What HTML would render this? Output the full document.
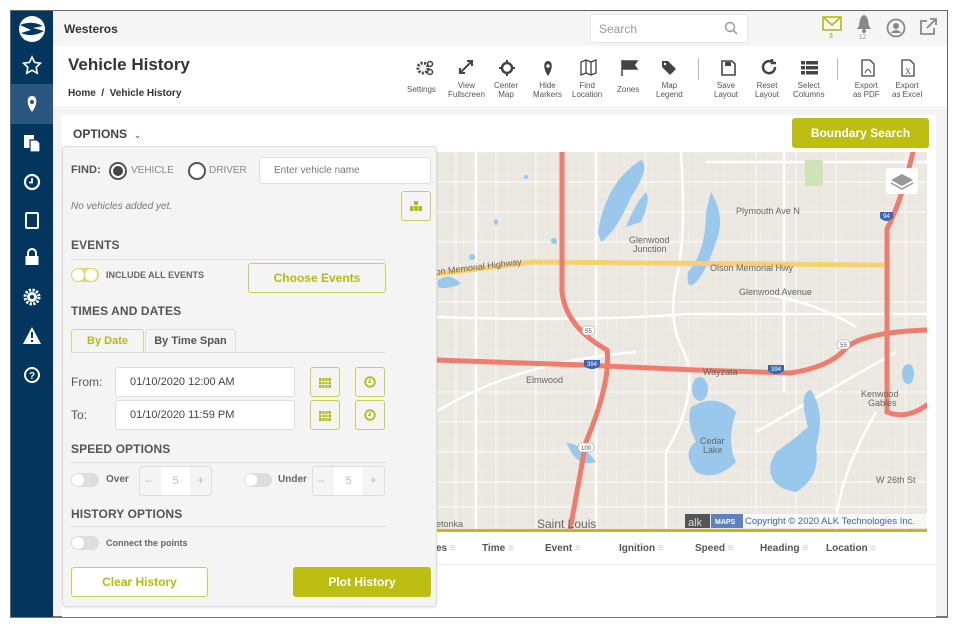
<!DOCTYPE html>
<html><head><meta charset="utf-8"><style>
*{box-sizing:border-box;margin:0;padding:0}
body{width:960px;height:633px;background:#fff;font-family:"Liberation Sans",sans-serif;position:relative;overflow:hidden;color:#444}
.a{position:absolute}
.frame{left:10px;top:10px;width:938px;height:608px;border:1px solid #666;border-bottom:2px solid #777;background:#f4f4f4;overflow:hidden}
.side{left:11px;top:11px;width:42px;height:606px;background:#03365f}
.ic{position:absolute;left:0;width:42px;text-align:center}
.btnO{position:absolute;border:1.5px solid #c9cd5a;border-radius:3px;background:#fff;color:#b3ba14;font-weight:bold;font-size:12px;display:flex;align-items:center;justify-content:center}
.lbl{position:absolute;font-size:12px;color:#555}
.h{position:absolute;font-size:12px;color:#555;font-weight:bold;letter-spacing:.1px}
.line{position:absolute;height:1px;background:#ddd}
.inp{position:absolute;background:#fff;border:1px solid #ddd;border-radius:3px;font-size:11px;color:#444;padding-left:14px;display:flex;align-items:center}
.tog{position:absolute;width:28px;height:14px;border-radius:7px;background:#ddd}
.tog:after{content:"";position:absolute;left:1px;top:1px;width:12px;height:12px;border-radius:6px;background:#fff}
.tb{position:absolute;top:60px;text-align:center;font-size:8px;color:#555;line-height:9px}
.th{position:absolute;top:543px;font-size:10px;color:#555;font-weight:bold}
.th i{font-style:normal;color:#ccc;font-weight:normal}
</style></head><body>
<div class="a frame"></div>
<div class="a side">
 <div class="ic" style="top:73px;height:40px;background:#2a5680"></div>
 <svg class="a" style="left:0;top:0" width="42" height="380" viewBox="0 0 42 380">
  <circle cx="21" cy="18" r="13" fill="#fff"/>
  <path d="M9 14 Q21 9 32 15 L22 17 L33 20 Q21 27 10 22 L20 19Z" fill="#03365f"/>
  <path d="M21 46 l2.6 5.4 5.8.8-4.2 4.1 1 5.8-5.2-2.8-5.2 2.8 1-5.8-4.2-4.1 5.8-.8z" fill="none" stroke="#fff" stroke-width="1.6"/>
  <path d="M21 101 C15 93 15.5 85 21 85 C26.5 85 27 93 21 101Z" fill="#fff"/><circle cx="21" cy="91" r="2" fill="#2a5680"/>
  <rect x="13" y="124" width="10" height="13" fill="#fff"/><path d="M19 129 h7 l3 3 v9 h-10z" fill="#fff" stroke="#03365f" stroke-width="1.2"/>
  <circle cx="21" cy="171" r="7" fill="none" stroke="#fff" stroke-width="2.2"/><path d="M21 167 v4.5 h-3" stroke="#fff" stroke-width="1.8" fill="none"/>
  <rect x="15" y="202" width="12" height="15" rx="1" fill="none" stroke="#fff" stroke-width="2"/>
  <rect x="14.5" y="245" width="13" height="9" fill="#fff"/><path d="M17 245 v-3 a4 4 0 0 1 8 0 v3" stroke="#fff" stroke-width="2" fill="none"/>
  <circle cx="21" cy="286" r="5" fill="#fff"/><circle cx="21" cy="286" r="7" fill="none" stroke="#fff" stroke-width="3" stroke-dasharray="2.2 1.5"/><circle cx="21" cy="286" r="2" fill="#03365f"/>
  <path d="M21 316 L30 333 H12Z" fill="#fff"/><rect x="20" y="321" width="2" height="6" fill="#03365f"/><rect x="20" y="329" width="2" height="2" fill="#03365f"/>
  <circle cx="21" cy="364" r="7" fill="none" stroke="#fff" stroke-width="2"/><text x="21" y="368" font-size="10" font-weight="bold" fill="#fff" text-anchor="middle" font-family="Liberation Sans">?</text>
 </svg>
</div>
<div class="a" style="left:53px;top:11px;width:894px;height:35px;background:#f5f5f5"></div>
<div class="a" style="left:64px;top:22px;font-size:12px;font-weight:bold;color:#333">Westeros</div>
<div class="a" style="left:590px;top:14px;width:158px;height:29px;background:#fff;border:1px solid #e6e6e6;border-radius:3px"></div>
<div class="a" style="left:599px;top:22px;font-size:12px;color:#999">Search</div>
<svg class="a" style="left:724px;top:21px" width="14" height="14"><circle cx="6" cy="6" r="4.5" fill="none" stroke="#999" stroke-width="1.4"/><path d="M9.5 9.5 L13 13" stroke="#999" stroke-width="1.5"/></svg>
<svg class="a" style="left:822px;top:16px" width="20" height="16"><rect x="1" y="1" width="18" height="13" fill="none" stroke="#b3ba14" stroke-width="1.6"/><path d="M1 1 L10 9 L19 1" fill="none" stroke="#b3ba14" stroke-width="1.6"/></svg>
<div class="a" style="left:829px;top:33px;font-size:7px;color:#b3ba14;font-weight:bold">3</div>
<svg class="a" style="left:856px;top:14px" width="16" height="20"><path d="M8 1 C3 3 4 8 3 12 L1 15 H15 L13 12 C12 8 13 3 8 1Z" fill="#888"/><circle cx="8" cy="17" r="2" fill="#888"/></svg>
<div class="a" style="left:859px;top:33px;font-size:7px;color:#888;font-family:'Liberation Serif',serif">12</div>
<svg class="a" style="left:886px;top:18px" width="20" height="20"><circle cx="10" cy="10" r="8.5" fill="none" stroke="#888" stroke-width="1.8"/><circle cx="10" cy="8" r="3" fill="#888"/><path d="M4.5 15 Q10 9 15.5 15" fill="#888"/></svg>
<svg class="a" style="left:918px;top:17px" width="20" height="20"><path d="M9 4 H3 V17 H16 V11" fill="none" stroke="#888" stroke-width="1.8"/><path d="M9 11 L17 3 M12 2 H18 V8" fill="none" stroke="#888" stroke-width="1.8"/></svg>
<div class="a" style="left:53px;top:46px;width:894px;height:60px;background:#fff"></div>
<div class="a" style="left:68px;top:55px;font-size:17px;font-weight:bold;color:#333">Vehicle History</div>
<div class="a" style="left:68px;top:88px;font-size:10px;color:#333;font-weight:bold">Home &nbsp;/ &nbsp;Vehicle History</div>
<svg class="a" style="left:400px;top:58px" width="540" height="22" fill="#444">
 <g transform="translate(17,2)"><circle cx="6" cy="8" r="5" fill="none" stroke="#444" stroke-width="3" stroke-dasharray="2 1.5"/><circle cx="13" cy="4" r="2.5" fill="none" stroke="#444" stroke-width="1.5"/><circle cx="13" cy="12" r="2.5" fill="none" stroke="#444" stroke-width="1.5"/></g>
 <path d="M60 15 L72 3 M67 3 H72 V8 M60 10 V15 H65" fill="none" stroke="#444" stroke-width="2"/>
 <g transform="translate(107,10)"><circle r="5" fill="none" stroke="#444" stroke-width="2.5"/><path d="M0 -8 V-4 M0 4 V8 M-8 0 H-4 M4 0 H8" stroke="#444" stroke-width="2"/></g>
 <path d="M148 18 C143 11 143 3 148 3 C153 3 153 11 148 18Z"/><circle cx="148" cy="8" r="1.7" fill="#fff"/>
 <path d="M181 4 L186 2 L191 4 L196 2 V15 L191 17 L186 15 L181 17Z M186 2 V15 M191 4 V17" fill="none" stroke="#444" stroke-width="1.3"/>
 <path d="M222 2 V18 M223 3 H237 L234 7 L237 11 H223Z" stroke="#444" stroke-width="1.5"/>
 <path d="M262 3 H268 L276 11 L270 17 L262 9Z"/><circle cx="265" cy="6" r="1.2" fill="#fff"/>
 <rect x="298" y="-2" width="1" height="40" fill="#bbb"/>
 <path d="M322 3 H332 L335 6 V17 H322Z" fill="none" stroke="#444" stroke-width="1.6"/><rect x="325" y="4" width="6" height="4"/>
 <path d="M375 9 A6 6 0 1 1 372 4 M372 1 V5 H376" fill="none" stroke="#444" stroke-width="2.5"/>
 <rect x="401" y="3" width="4" height="3.5"/><rect x="406" y="3" width="12" height="3.5"/><rect x="401" y="8" width="4" height="3.5"/><rect x="406" y="8" width="12" height="3.5"/><rect x="401" y="13" width="4" height="3.5"/><rect x="406" y="13" width="12" height="3.5"/>
 <rect x="437" y="-2" width="1" height="40" fill="#bbb"/>
 <path d="M462 2 H470 L474 6 V18 H462Z" fill="none" stroke="#444" stroke-width="1.3"/><path d="M465 15 Q468 8 471 15" fill="none" stroke="#444" stroke-width="1"/>
 <path d="M502 2 H510 L514 6 V18 H502Z" fill="none" stroke="#444" stroke-width="1.3"/><text x="508" y="16" font-size="8" text-anchor="middle" font-family="Liberation Serif">X</text>
</svg>
<div class="tb" style="left:407px;top:85px">Settings</div>
<div class="tb" style="left:448px;top:81px">View<br>Fullscreen</div>
<div class="tb" style="left:494px;top:81px">Center<br>Map</div>
<div class="tb" style="left:533px;top:81px">Hide<br>Markers</div>
<div class="tb" style="left:572px;top:81px">Find<br>Location</div>
<div class="tb" style="left:617px;top:85px">Zones</div>
<div class="tb" style="left:656px;top:81px">Map<br>Legend</div>
<div class="tb" style="left:714px;top:81px">Save<br>Layout</div>
<div class="tb" style="left:755px;top:81px">Reset<br>Layout</div>
<div class="tb" style="left:793px;top:81px">Select<br>Columns</div>
<div class="tb" style="left:853px;top:81px">Export<br>as PDF</div>
<div class="tb" style="left:892px;top:81px">Export<br>as Excel</div>
<div class="a" style="left:62px;top:115px;width:874px;height:502px;background:#fff"></div>
<div class="a" style="left:73px;top:127px;font-size:12px;font-weight:bold;color:#444">OPTIONS &nbsp;<span style="font-weight:normal;font-size:9px">&#8964;</span></div>
<div class="a" style="left:792px;top:118px;width:137px;height:30px;background:#bcbf12;border-radius:3px;color:#fff;font-weight:bold;font-size:12px;display:flex;align-items:center;justify-content:center">Boundary Search</div>
<svg class="a" style="left:436px;top:152px" width="491" height="378" viewBox="0 0 491 378">
 <defs><pattern id="g" width="9" height="11" patternUnits="userSpaceOnUse"><path d="M0 0 H9 M0 0 V11" stroke="#fff" stroke-width=".6" opacity=".55" fill="none"/></pattern></defs>
 <rect width="491" height="378" fill="#ebe7e1"/>
 <rect width="491" height="378" fill="url(#g)"/>
 <g stroke="#fff" stroke-width="0.9" opacity=".9" fill="none">
  <path d="M0 30 H491 M0 60 H491 M0 90 H491 M0 150 H491 M0 240 H491 M0 270 H491 M0 300 H491 M0 330 H491 M0 355 H491"/>
  <path d="M20 0 V378 M60 0 V378 M100 0 V378 M210 0 V378 M320 0 V378 M360 0 V378 M400 0 V378 M470 0 V378"/>
 </g>
 <g stroke="#fff" stroke-width="2.5" fill="none">
  <path d="M160 0 V378 M245 0 Q250 80 242 120 Q230 170 248 200 Q265 240 230 300 V378"/>
  <path d="M270 10 H491 M0 165 Q150 170 250 162 H491 M0 260 Q80 210 200 200 M348 0 V240 M320 280 Q390 240 460 200"/>
  <path d="M320 140 Q380 150 420 175 M40 0 V378 M440 260 Q400 330 400 378"/>
 </g>
 <g fill="#9ac7ec">
  <path d="M162 80 Q170 30 205 8 Q215 15 195 45 Q180 80 165 90Z"/>
  <path d="M190 75 Q200 50 210 40 Q215 48 205 70Z"/>
  <path d="M275 40 Q290 65 280 90 Q270 120 260 130 Q250 140 252 120 Q270 100 270 60Z"/>
  <path d="M255 255 Q280 240 300 260 Q290 290 300 310 Q280 330 260 320 Q245 300 260 290 Q250 270 255 255Z"/>
  <path d="M340 300 Q355 290 372 275 Q362 240 375 238 Q390 260 380 295 Q385 325 360 340 Q330 335 335 310Z"/>
  <path d="M130 290 Q150 295 160 310 Q145 315 135 300Z"/>
  <path d="M2 128 Q15 120 25 132 Q10 138 2 135Z"/>
  <ellipse cx="264" cy="237" rx="8" ry="12"/>
  <ellipse cx="472" cy="222" rx="6" ry="10"/>
  <ellipse cx="118" cy="89" rx="3" ry="3"/><ellipse cx="60" cy="70" rx="2" ry="3"/><ellipse cx="36" cy="105" rx="3" ry="3"/><ellipse cx="90" cy="25" rx="2" ry="2"/>
 </g>
 <rect x="369" y="8" width="18" height="26" fill="#cfe3b8"/>
 <g fill="none" stroke-linecap="round">
  <path d="M0 122 L97 110 L447 113" stroke="#f9cf74" stroke-width="5"/>
  <path d="M126 0 V140 Q130 175 171 198 Q175 230 150 290 L134 378" stroke="#ef7c6c" stroke-width="5"/>
  <path d="M0 208 L147 213 L260 218 L354 221 Q395 215 411 195 Q430 180 491 178" stroke="#ef7c6c" stroke-width="5"/>
  <path d="M477 0 Q465 50 451 77 V260 Q470 268 491 253" stroke="#ef7c6c" stroke-width="5"/>
 </g>
 <g font-family="Liberation Sans" font-size="9" fill="#666">
  <text x="193" y="91">Glenwood</text><text x="197" y="100">Junction</text>
  <text x="0" y="123" transform="rotate(-7 0 123)">on Memorial Highway</text>
  <text x="274" y="119">Olson Memorial Hwy</text>
  <text x="300" y="62">Plymouth Ave N</text>
  <text x="303" y="143">Glenwood Avenue</text>
  <text x="90" y="231">Elmwood</text><text x="267" y="223">Wayzata</text>
  <text x="264" y="292">Cedar</text><text x="267" y="301">Lake</text>
  <text x="425" y="245">Kenwood</text><text x="432" y="254">Gables</text>
  <text x="440" y="331">W 26th St</text>
  <text x="0" y="375">etonka</text><text x="101" y="376" font-size="12">Saint Louis</text>
 </g>
 <g font-family="Liberation Sans" font-size="6" text-anchor="middle">
  <rect x="146" y="174" width="13" height="9" rx="4" fill="#fff" stroke="#999" stroke-width=".6"/><text x="152.5" y="181" fill="#555">55</text>
  <rect x="401" y="188" width="13" height="9" rx="4" fill="#fff" stroke="#999" stroke-width=".6"/><text x="407.5" y="195" fill="#555">55</text>
  <rect x="142" y="291" width="16" height="9" rx="4" fill="#fff" stroke="#999" stroke-width=".6"/><text x="150" y="298" fill="#555">100</text>
  <path d="M148 208 h16 v6 q-8 6 -16 0z" fill="#3b66b5"/><text x="156" y="214" fill="#fff">394</text>
  <path d="M332 213 h16 v6 q-8 6 -16 0z" fill="#3b66b5"/><text x="340" y="219" fill="#fff">394</text>
  <path d="M444 60 h13 v6 q-6.5 6 -13 0z" fill="#3b66b5"/><text x="450.5" y="66" fill="#fff">94</text>
 </g>
 <rect x="450" y="16" width="32" height="26" rx="3" fill="#fff"/>
 <path d="M466 22 L477 28 L466 34 L455 28Z" fill="#999"/><path d="M455 31 L466 37 L477 31" fill="none" stroke="#999" stroke-width="1.5"/>
 <rect x="249" y="362" width="25" height="14" fill="#555"/><text x="252" y="374" font-family="Liberation Sans" font-size="11" fill="#ddd">alk</text>
 <rect x="275" y="362" width="32" height="14" fill="#5c82c0"/><text x="279" y="372" font-family="Liberation Sans" font-size="7" font-weight="bold" fill="#fff">MAPS</text>
 <rect x="307" y="362" width="184" height="14" fill="#fff" opacity=".7"/><text x="309" y="372" font-family="Liberation Sans" font-size="9.5" fill="#3366cc">Copyright © 2020 ALK Technologies Inc.</text>
</svg>
<div class="a" style="left:436px;top:529px;width:491px;height:3px;background:#bcbf12"></div>
<div class="th" style="left:436px">es <i>&#8801;</i></div>
<div class="th" style="left:482px">Time <i>&#8801;</i></div>
<div class="th" style="left:545px">Event <i>&#8801;</i></div>
<div class="th" style="left:619px">Ignition <i>&#8801;</i></div>
<div class="th" style="left:695px">Speed <i>&#8801;</i></div>
<div class="th" style="left:760px">Heading <i>&#8801;</i></div>
<div class="th" style="left:826px">Location <i>&#8801;</i></div>
<div class="line" style="left:436px;top:564px;width:500px;background:#e6e6e6"></div>
<div class="a" style="left:62px;top:146px;width:375px;height:461px;background:#f4f4f4;border:1px solid #ddd;border-radius:4px;box-shadow:0 1px 2px rgba(0,0,0,.1)"></div>
<div class="h" style="left:71px;top:164px;font-size:11px">FIND:</div>
<div class="a" style="left:109px;top:162px;width:18px;height:18px;border-radius:9px;border:2px solid #555;background:#fff"></div>
<div class="a" style="left:113px;top:166px;width:10px;height:10px;border-radius:5px;background:#444"></div>
<div class="lbl" style="left:131px;top:165px;font-size:10px;color:#888">VEHICLE</div>
<div class="a" style="left:188px;top:162px;width:18px;height:18px;border-radius:9px;border:2px solid #555;background:#fff"></div>
<div class="lbl" style="left:209px;top:165px;font-size:10px;color:#888">DRIVER</div>
<div class="inp" style="left:259px;top:157px;width:172px;height:27px;color:#777;font-size:10px">Enter vehicle name</div>
<div class="lbl" style="left:71px;top:201px;font-size:10px;font-style:italic;color:#777">No vehicles added yet.</div>
<div class="btnO" style="left:401px;top:191px;width:30px;height:30px;background:#f4f4f4"><svg width="12" height="10"><rect x="4" y="0" width="4" height="4" fill="#b3ba14"/><rect x="0" y="5" width="3.5" height="5" fill="#b3ba14"/><rect x="4.3" y="5" width="3.5" height="5" fill="#b3ba14"/><rect x="8.5" y="5" width="3.5" height="5" fill="#b3ba14"/></svg></div>
<div class="h" style="left:71px;top:238px">EVENTS</div>
<div class="line" style="left:71px;top:259px;width:315px"></div>
<div class="tog" style="left:71px;top:268px;background:#d7dc72"><span class="a" style="left:14px;top:1px;width:12px;height:12px;border-radius:6px;background:#fff"></span></div>
<div class="lbl" style="left:106px;top:270px;font-size:9px;font-weight:bold;color:#666">INCLUDE ALL EVENTS</div>
<div class="btnO" style="left:248px;top:263px;width:138px;height:30px;background:#f4f4f4">Choose Events</div>
<div class="h" style="left:71px;top:304px">TIMES AND DATES</div>
<div class="a" style="left:71px;top:329px;width:73px;height:23px;border:1.5px solid #d7dc72;border-bottom:none;border-radius:3px 3px 0 0;color:#b3ba14;font-weight:bold;font-size:11px;text-align:center;line-height:22px">By Date</div>
<div class="a" style="left:145px;top:329px;width:91px;height:23px;border:1px solid #ddd;border-bottom:none;border-radius:3px 3px 0 0;color:#555;font-weight:bold;font-size:11px;text-align:center;line-height:22px">By Time Span</div>
<div class="line" style="left:71px;top:352px;width:315px"></div>
<div class="lbl" style="left:71px;top:375px">From:</div>
<div class="inp" style="left:115px;top:367px;width:180px;height:30px">01/10/2020 12:00 AM</div>
<div class="lbl" style="left:71px;top:408px">To:</div>
<div class="inp" style="left:115px;top:400px;width:180px;height:30px">01/10/2020 11:59 PM</div>
<div class="btnO" style="left:310px;top:367px;width:30px;height:30px;background:#f4f4f4"><svg width="12" height="12"><rect x="0" y="2" width="12" height="10" fill="#b3ba14"/><path d="M0 5.5 H12 M3 2 V12 M6 2 V12 M9 2 V12 M0 8.5 H12" stroke="#f4f4f4" stroke-width=".8"/></svg></div>
<div class="btnO" style="left:355px;top:367px;width:30px;height:30px;background:#f4f4f4"><svg width="12" height="12"><circle cx="6" cy="6" r="4.8" fill="none" stroke="#b3ba14" stroke-width="1.8"/><path d="M6 3 V6.3 H4" stroke="#b3ba14" stroke-width="1.3" fill="none"/></svg></div>
<div class="btnO" style="left:310px;top:400px;width:30px;height:30px;background:#f4f4f4"><svg width="12" height="12"><rect x="0" y="2" width="12" height="10" fill="#b3ba14"/><path d="M0 5.5 H12 M3 2 V12 M6 2 V12 M9 2 V12 M0 8.5 H12" stroke="#f4f4f4" stroke-width=".8"/></svg></div>
<div class="btnO" style="left:355px;top:400px;width:30px;height:30px;background:#f4f4f4"><svg width="12" height="12"><circle cx="6" cy="6" r="4.8" fill="none" stroke="#b3ba14" stroke-width="1.8"/><path d="M6 3 V6.3 H4" stroke="#b3ba14" stroke-width="1.3" fill="none"/></svg></div>
<div class="h" style="left:71px;top:442px">SPEED OPTIONS</div>
<div class="line" style="left:71px;top:462px;width:315px"></div>
<div class="tog" style="left:71px;top:473px"></div>
<div class="lbl" style="left:106px;top:474px;font-size:10px;font-weight:bold;color:#666">Over</div>
<div class="a" style="left:139px;top:466px;width:73px;height:30px;border:1px solid #ddd;border-radius:3px;background:#f4f4f4"></div>
<div class="a" style="left:161px;top:467px;width:29px;height:28px;background:#fff;color:#bbb;font-size:11px;text-align:center;line-height:28px">5</div>
<div class="lbl" style="left:145px;top:473px;color:#bbb">–</div><div class="lbl" style="left:197px;top:473px;color:#bbb">+</div>
<div class="tog" style="left:244px;top:473px"></div>
<div class="lbl" style="left:278px;top:474px;font-size:10px;font-weight:bold;color:#666">Under</div>
<div class="a" style="left:312px;top:466px;width:73px;height:30px;border:1px solid #ddd;border-radius:3px;background:#f4f4f4"></div>
<div class="a" style="left:334px;top:467px;width:29px;height:28px;background:#fff;color:#bbb;font-size:11px;text-align:center;line-height:28px">5</div>
<div class="lbl" style="left:318px;top:473px;color:#bbb">–</div><div class="lbl" style="left:370px;top:473px;color:#bbb">+</div>
<div class="h" style="left:71px;top:507px">HISTORY OPTIONS</div>
<div class="line" style="left:71px;top:526px;width:315px"></div>
<div class="tog" style="left:71px;top:536px"></div>
<div class="lbl" style="left:106px;top:538px;font-size:9px;font-weight:bold;color:#666">Connect the points</div>
<div class="btnO" style="left:71px;top:567px;width:137px;height:30px">Clear History</div>
<div class="a" style="left:293px;top:567px;width:138px;height:30px;background:#bcbf12;border-radius:3px;color:#fff;font-weight:bold;font-size:12px;display:flex;align-items:center;justify-content:center">Plot History</div>
</body></html>
